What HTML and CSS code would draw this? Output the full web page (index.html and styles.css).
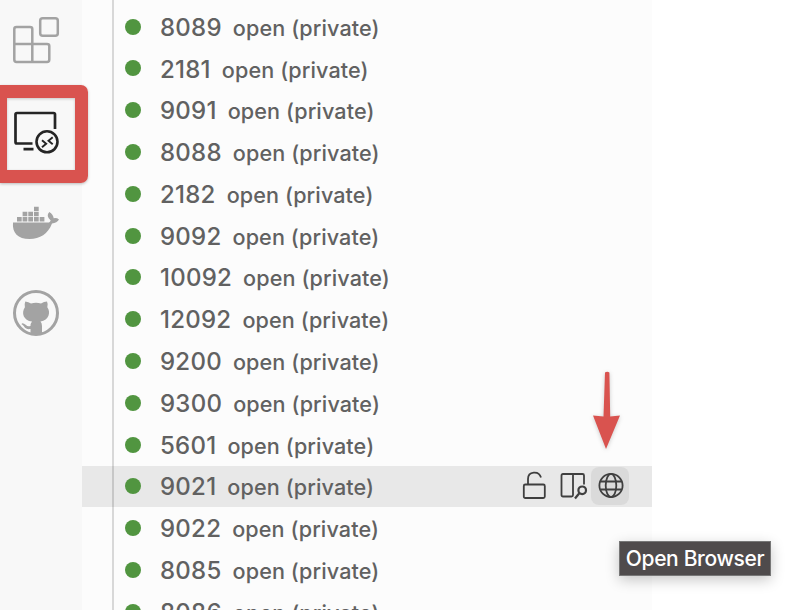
FILE: index.html
```
<!DOCTYPE html>
<html lang="en">
<head>
<meta charset="utf-8">
<title>Ports</title>
<link rel="stylesheet" href="styles.css">
</head>
<body>
<div class="workbench">
  <nav class="activity-bar">
    <svg class="activity extensions" viewBox="0 0 48 48" fill="none" stroke="#a3a3a3" stroke-width="2.5">
      <rect x="28.2" y="2.2" width="17.6" height="17.6" rx="2.5"/>
      <path d="M4.500 11H18Q20.300 11 20.300 13V28H35Q37.300 28 37.300 30V43.500Q37.300 46 35 46H4.500Q2.300 46 2.300 43.500V13Q2.300 11 4.500 11ZM2.300 28H20.300V46"/>
    </svg>
    <div class="selected">
      <svg class="activity" viewBox="0 0 48 48" fill="none" stroke="#252525" stroke-width="2.700">
        <path d="M43 21V6.500Q43 5 41.500 5H5Q3.500 5 3.500 6.500V34Q3.500 35.500 5 35.500H20.500M11.500 41.200H21.500"/>
        <circle cx="35" cy="33.800" r="10.500" stroke-width="2.600"/>
        <path d="M30 32.200L34.200 35.700L30 39.300M40.700 29.200L36.500 32.700L40.700 36.200" stroke-width="1.900"/>
      </svg>
    </div>
    <svg class="activity docker" viewBox="0 0 48 48" fill="#a3a3a3">
      <path d="M1 18.500H37Q38 18 38.700 16.500Q33.500 12 37.300 8Q41.200 10.500 41.700 14.200Q45 13.700 47 15.500Q45 19 40 19.500C36 30 28 35 17.500 35C6 35 0 29 1 18.500Z"/>
      <path d="M5 13h4.700v4.500H5zM10.600 13h4.700v4.500h-4.700zM16.300 13H21v4.500h-4.700zM22 13h4.700v4.500H22zM27.700 13h4.700v4.500h-4.700zM10.600 7.700h4.700v4.500h-4.700zM16.300 7.700H21v4.500h-4.700zM22 7.700h4.700v4.500H22zM22 2.700h4.700v4.300H22z"/>
    </svg>
    <svg class="activity github" viewBox="0 0 48 48">
      <circle cx="24" cy="24" r="21.500" fill="none" stroke="#a3a3a3" stroke-width="3"/>
      <path fill="#a3a3a3" d="M13.300 12.500Q16.500 12.800 19 14.500Q24 13.200 29 14.500Q32 12.600 35 12.500Q36.300 15.200 35.300 18.200C39 23 37 31.500 28.500 32.500Q30 34 30 37V46H18.500V40C12.500 41 12.700 36.500 9.500 35.200Q10 33.800 12 34.700C14.500 35.800 14.500 38 18.500 37Q18.500 34.300 20 32.500C11.500 31.500 9 24 12.900 18.200Q12.200 15 13.300 12.500Z"/>
    </svg>
  </nav>
  <main class="ports">
    <div class="guide"></div>
    <div class="row"><i class="dot"></i><span class="port">8089</span><span class="state">open (private)</span></div>
    <div class="row"><i class="dot"></i><span class="port">2181</span><span class="state">open (private)</span></div>
    <div class="row"><i class="dot"></i><span class="port">9091</span><span class="state">open (private)</span></div>
    <div class="row"><i class="dot"></i><span class="port">8088</span><span class="state">open (private)</span></div>
    <div class="row"><i class="dot"></i><span class="port">2182</span><span class="state">open (private)</span></div>
    <div class="row"><i class="dot"></i><span class="port">9092</span><span class="state">open (private)</span></div>
    <div class="row"><i class="dot"></i><span class="port">10092</span><span class="state">open (private)</span></div>
    <div class="row"><i class="dot"></i><span class="port">12092</span><span class="state">open (private)</span></div>
    <div class="row"><i class="dot"></i><span class="port">9200</span><span class="state">open (private)</span></div>
    <div class="row"><i class="dot"></i><span class="port">9300</span><span class="state">open (private)</span></div>
    <div class="row"><i class="dot"></i><span class="port">5601</span><span class="state">open (private)</span></div>
    <div class="row hovered"><i class="dot"></i><span class="port">9021</span><span class="state">open (private)</span>
      <div class="actions">
        <span class="action"><svg viewBox="0 0 38 38" fill="none" stroke="#3f3f3f" stroke-width="1.800"><rect x="8.800" y="17.500" width="21" height="13.500" rx="1.500"/><path d="M13 17.500V12C13 4 24 3.500 26 10.500"/></svg></span>
        <span class="action"><svg viewBox="0 0 38 38" fill="none" stroke="#3f3f3f" stroke-width="1.800"><path d="M19 29.500H10Q8.500 29.500 8.500 28V8.500Q8.500 7 10 7H29.500Q31 7 31 8.500V17.500M20 7V28Q20 29.500 18.500 29.500"/><circle cx="29.200" cy="23.300" r="3.800" stroke-width="2.200"/><path d="M26.500 26L22 31.500" stroke-width="2.200"/></svg></span>
        <span class="action active"><svg viewBox="0 0 38 38" fill="none" stroke="#3f3f3f" stroke-width="1.800"><circle cx="20" cy="18.500" r="11.600"/><ellipse cx="20" cy="18.500" rx="5.300" ry="11.600"/><path d="M9.500 14.500H30.500M9.500 22.500H30.500"/></svg></span>
      </div>
    </div>
    <div class="row"><i class="dot"></i><span class="port">9022</span><span class="state">open (private)</span></div>
    <div class="row"><i class="dot"></i><span class="port">8085</span><span class="state">open (private)</span></div>
    <div class="row"><i class="dot"></i><span class="port">8086</span><span class="state">open (private)</span></div>
  </main>
  <svg class="arrow" viewBox="0 0 40 90"><path fill="#d9534f" d="M15 12.500Q17.200 11 19.400 12.500L20.200 56.500L30 55.500L16 89L3 55.500L13.500 56.500Z"/></svg>
  <div class="tooltip">Open Browser</div>
</div>
</body>
</html>
```
FILE: styles.css
```
* {
  box-sizing: border-box;
}

body {
  margin: 0;
  background: #fff;
  font-family: Inter, "Liberation Sans", sans-serif;
  color: #616161;
}

.workbench {
  position: relative;
  display: flex;
  width: 800px;
  height: 610px;
  overflow: hidden;
}

.activity-bar {
  flex: none;
  width: 82px;
  background: #f8f8f8;
  display: flex;
  flex-direction: column;
  align-items: flex-start;
}

.activity {
  display: block;
  flex: none;
  width: 48px;
  height: 48px;
  margin-left: 12px;
}

.extensions {
  margin-top: 16px;
}

.selected {
  position: relative;
  z-index: 2;
  flex: none;
  width: 88px;
  height: 98px;
  margin-top: 21px;
  border: solid #d9534f;
  border-width: 13px 13px 13px 7px;
  border-radius: 0 7px 7px 0;
  box-shadow: 0 1px 3px rgba(0, 0, 0, 0.25), inset 0 1px 3px rgba(0, 0, 0, 0.2);
}

.selected .activity {
  margin: 10px 0 0 5px;
}

.docker {
  margin-top: 21px;
}

.github {
  margin-top: 37px;
}

.ports {
  position: relative;
  flex: none;
  width: 570px;
  background: #fcfcfc;
  padding-top: 5.800px;
}

.guide {
  position: absolute;
  z-index: 1;
  top: 0;
  bottom: 0;
  left: 30px;
  width: 2px;
  background: rgba(0, 0, 0, 0.140);
}

.row {
  display: flex;
  align-items: center;
  height: 41.800px;
  padding-left: 43px;
  white-space: nowrap;
}

.hovered {
  background: #e8e8e8;
}

.dot {
  width: 16px;
  height: 16px;
  margin-right: 19px;
  border-radius: 50%;
  background: #519540;
}

.port {
  font-size: 24px;
  font-weight: 500;
  letter-spacing: 0.250px;
  line-height: 40px;
  padding-top: 2px;
}

.state {
  margin-left: 11px;
  padding-top: 2px;
  font-size: 21.600px;
  font-weight: 500;
  letter-spacing: 0.100px;
  line-height: 40px;
}

.actions {
  display: flex;
  margin-left: auto;
  margin-right: 23px;
}

.action {
  width: 38px;
  height: 38px;
  border-radius: 8px;
}

.action svg {
  display: block;
}

.active {
  background: #dadada;
}

.arrow {
  position: absolute;
  left: 590px;
  top: 360px;
  width: 40px;
  height: 90px;
  filter: drop-shadow(0 1px 2px rgba(0, 0, 0, 0.2));
}

.tooltip {
  position: absolute;
  left: 619px;
  top: 541px;
  width: 152px;
  height: 35px;
  border: 1px solid #777;
  background: #4f4b4c;
  color: #fff;
  font-size: 21px;
  font-weight: 500;
  letter-spacing: -0.350px;
  line-height: 34px;
  text-align: center;
  white-space: nowrap;
  box-shadow: 0 4px 14px rgba(0, 0, 0, 0.220);
}
```
